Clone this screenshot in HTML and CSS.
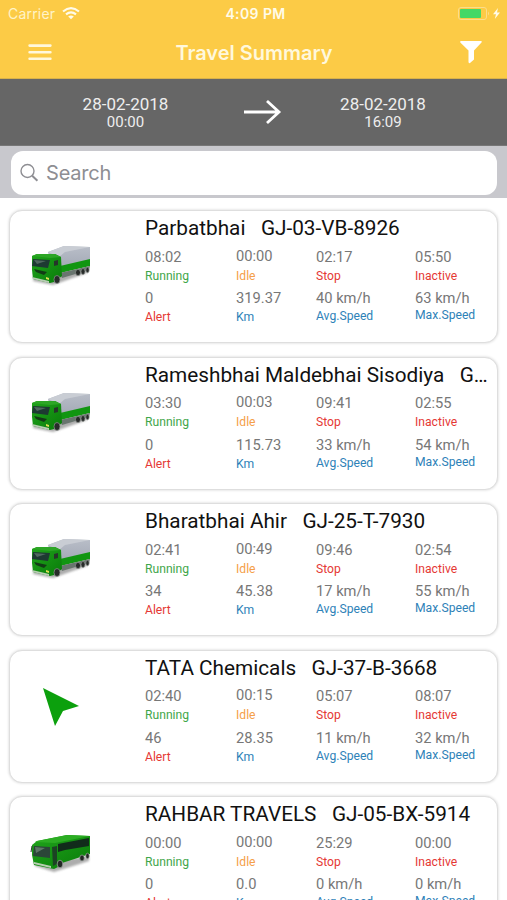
FILE: index.html
```
<!DOCTYPE html>
<html lang="en">
<head>
<meta charset="utf-8">
<title>Travel Summary</title>
<link rel="stylesheet" href="styles.css">
</head>
<body>
<svg class="defs" aria-hidden="true">
  <defs>
    <linearGradient id="cargo" x1="0" y1="0" x2="0" y2="1"><stop offset="0" stop-color="#b9bec8"/><stop offset="1" stop-color="#a3a9b6"/></linearGradient>
    <linearGradient id="paint" x1="0" y1="0" x2="1" y2="1"><stop offset="0" stop-color="#21a51c"/><stop offset="1" stop-color="#087b09"/></linearGradient>
    <filter id="soft" x="-20%" y="-50%" width="140%" height="200%"><feGaussianBlur stdDeviation="1.3"/></filter>
  </defs>
  <symbol id="truck" viewBox="0 0 80 60">
    <path d="M13 46l20 4 34-12v-4L14 40z" fill="#777" opacity=".6" filter="url(#soft)"/>
    <path d="M28 17l16-6 26 1v13l-29 8-12-12z" fill="url(#cargo)"/>
    <path d="M28 17l16-6 26 1-25 5-6 5z" fill="#c9cdd4"/>
    <path d="M40 31l30-7v7l-30 7z" fill="#119611"/>
    <path d="M40 38l30-7-1 4-27 8z" fill="#69756f"/>
    <path d="M12 21l5-2 18 0 6 3 1 19-8 6-4 1-17-4-1-9z" fill="url(#paint)"/>
    <path d="M12 21l5-2 18 0 6 3-11 1z" fill="#2da626"/>
    <path d="M13 24l17 1-2 8-16-2z" fill="#1d3a32"/>
    <path d="M14 25l12 1-9 3z" fill="#50685f"/>
    <path d="M14 34l13 3-3 3-8-3z" fill="#123c15"/>
    <path d="M34 26l4-1v5l-4 1z" fill="#26352a"/>
    <path d="M12 42l17 4v2l-16-4z" fill="#b9cdb4"/>
    <path d="M26 42l3 1v2l-3-1z" fill="#dcdf53"/>
    <g fill="#272b29" stroke="#929793" stroke-width=".7"><ellipse cx="37" cy="44.5" rx="3" ry="4"/><ellipse cx="58" cy="37.5" rx="2.5" ry="3.1"/><ellipse cx="63" cy="36.5" rx="2" ry="3"/><ellipse cx="67.5" cy="35" rx="1.7" ry="2.8"/></g>
  </symbol>
  <symbol id="bus" viewBox="0 0 80 60">
    <path d="M15 45l19 6 35-11v-4L14 40z" fill="#777" opacity=".6" filter="url(#soft)"/>
    <path d="M12 24l5-4 30-6 23 1v18l-28 9-4 4-4 2-20-4-2-10z" fill="url(#paint)"/>
    <path d="M17 20l30-6 23 1-35 7-20-1z" fill="#2cad23"/>
    <path d="M14 25l16 1v11l-17-2z" fill="#2b4638"/>
    <path d="M15 26l10 1-9 5z" fill="#5e7767"/>
    <path d="M38 23l31-6v8l-24 4-7 2z" fill="#112c1b"/>
    <path d="M32 26l5-1v18l-4 2z" fill="#1c4324"/>
    <path d="M14 41l17 4v2l-17-4z" fill="#baceb4"/>
    <path d="M12 25l-1 6" stroke="#263a29" fill="none"/>
    <g fill="#222724" stroke="#a4a9a5" stroke-width=".7"><ellipse cx="40" cy="43" rx="2.8" ry="3.8"/><ellipse cx="62" cy="37" rx="2.3" ry="3"/><ellipse cx="67.5" cy="35" rx="1.8" ry="2.8"/></g>
  </symbol>
  <symbol id="pointer" viewBox="0 0 80 60">
    <path d="M23 13l36 18-16 5-8 15z" fill="#0ca00d"/>
  </symbol>
</svg>

<header class="top">
  <div class="status">
    <div class="carrier"><span>Carrier</span>
      <svg width="18" height="13" viewBox="0 0 18 13" fill="none" stroke="#fffbe9" stroke-width="2.1"><path d="M1 4.5Q9-2.2 17 4.5M4 7.4q5-4.2 10 0"/><path d="M6.2 9.6q2.8-2 5.6 0L9 12.3z" fill="#fffbe9" stroke="none"/></svg>
    </div>
    <div class="clock">4:09 PM</div>
    <div class="power">
      <svg width="44" height="14" viewBox="0 0 44 14"><rect x=".5" y=".5" width="28" height="12" rx="2.5" fill="none" stroke="#fbdd8b"/><rect x="2" y="2" width="21" height="9" rx="1" fill="#45d866"/><path d="M30 4.5q2 2 0 4z" fill="#fbdd8b"/><path d="M40 1l-5 6.2h3L36.8 12l5.2-6.4h-3z" fill="#fffbe9"/></svg>
    </div>
  </div>
  <div class="nav">
    <svg class="menu" width="24" height="18" viewBox="0 0 24 18" stroke="#fff8dc" stroke-width="2.6" stroke-linecap="round"><path d="M1.6 1.6h20.8M1.6 8.2h20.8M1.6 14.8h20.8"/></svg>
    <h1>Travel Summary</h1>
    <svg class="filter" width="24" height="24" viewBox="0 0 24 24" fill="#fff"><path d="M2 0h20q1.5 0 .5 1.5L15 9.5v9L11 22q-1.5.5-1.5-1V9.5L1.3 1.5Q.5 0 2 0z"/></svg>
  </div>
</header>

<section class="range">
  <div class="date">28-02-2018<small>00:00</small></div>
  <svg width="40" height="26" viewBox="0 0 40 26" fill="none" stroke="#fff" stroke-width="2.8"><path d="M2 13h35M25 2l12 11-12 11"/></svg>
  <div class="date">28-02-2018<small>16:09</small></div>
</section>

<div class="search">
  <div class="field">
    <svg width="20" height="20" viewBox="0 0 20 20" fill="none" stroke="#8e8e93" stroke-width="1.4"><circle cx="7.5" cy="8" r="6.5"/><path d="M12.2 12.7l5.2 5" stroke-width="2"/></svg>
    <span>Search</span>
  </div>
</div>

<main class="list">
  <article class="card">
    <svg class="vehicle"><use href="#truck"/></svg>
    <div class="info">
      <h2>Parbatbhai&nbsp;&nbsp; GJ-03-VB-8926</h2>
      <div class="stats">
        <div class="stat">08:02<span class="green">Running</span></div><div class="stat raised">00:00<span class="orange">Idle</span></div><div class="stat">02:17<span class="red">Stop</span></div><div class="stat">05:50<span class="red">Inactive</span></div>
        <div class="stat">0<span class="red">Alert</span></div><div class="stat">319.37<span class="blue">Km</span></div><div class="stat avg">40 km/h<span class="blue">Avg.Speed</span></div><div class="stat max">63 km/h<span class="blue">Max.Speed</span></div>
      </div>
    </div>
  </article>
  <article class="card">
    <svg class="vehicle"><use href="#truck"/></svg>
    <div class="info">
      <h2>Rameshbhai Maldebhai Sisodiya&nbsp;&nbsp; G…</h2>
      <div class="stats">
        <div class="stat">03:30<span class="green">Running</span></div><div class="stat raised">00:03<span class="orange">Idle</span></div><div class="stat">09:41<span class="red">Stop</span></div><div class="stat">02:55<span class="red">Inactive</span></div>
        <div class="stat">0<span class="red">Alert</span></div><div class="stat">115.73<span class="blue">Km</span></div><div class="stat avg">33 km/h<span class="blue">Avg.Speed</span></div><div class="stat max">54 km/h<span class="blue">Max.Speed</span></div>
      </div>
    </div>
  </article>
  <article class="card">
    <svg class="vehicle"><use href="#truck"/></svg>
    <div class="info">
      <h2>Bharatbhai Ahir&nbsp;&nbsp; GJ-25-T-7930</h2>
      <div class="stats">
        <div class="stat">02:41<span class="green">Running</span></div><div class="stat raised">00:49<span class="orange">Idle</span></div><div class="stat">09:46<span class="red">Stop</span></div><div class="stat">02:54<span class="red">Inactive</span></div>
        <div class="stat">34<span class="red">Alert</span></div><div class="stat">45.38<span class="blue">Km</span></div><div class="stat avg">17 km/h<span class="blue">Avg.Speed</span></div><div class="stat max">55 km/h<span class="blue">Max.Speed</span></div>
      </div>
    </div>
  </article>
  <article class="card">
    <svg class="vehicle"><use href="#pointer"/></svg>
    <div class="info">
      <h2>TATA Chemicals&nbsp;&nbsp; GJ-37-B-3668</h2>
      <div class="stats">
        <div class="stat">02:40<span class="green">Running</span></div><div class="stat raised">00:15<span class="orange">Idle</span></div><div class="stat">05:07<span class="red">Stop</span></div><div class="stat">08:07<span class="red">Inactive</span></div>
        <div class="stat">46<span class="red">Alert</span></div><div class="stat">28.35<span class="blue">Km</span></div><div class="stat avg">11 km/h<span class="blue">Avg.Speed</span></div><div class="stat max">32 km/h<span class="blue">Max.Speed</span></div>
      </div>
    </div>
  </article>
  <article class="card">
    <svg class="vehicle"><use href="#bus"/></svg>
    <div class="info">
      <h2>RAHBAR TRAVELS&nbsp;&nbsp; GJ-05-BX-5914</h2>
      <div class="stats">
        <div class="stat">00:00<span class="green">Running</span></div><div class="stat raised">00:00<span class="orange">Idle</span></div><div class="stat">25:29<span class="red">Stop</span></div><div class="stat">00:00<span class="red">Inactive</span></div>
        <div class="stat">0<span class="red">Alert</span></div><div class="stat">0.0<span class="blue">Km</span></div><div class="stat avg">0 km/h<span class="blue">Avg.Speed</span></div><div class="stat max">0 km/h<span class="blue">Max.Speed</span></div>
      </div>
    </div>
  </article>
</main>
</body>
</html>
```
FILE: styles.css
```
* { box-sizing: border-box; }
body { margin: 0; width: 507px; height: 900px; overflow: hidden; background: #fff; font-family: Roboto, sans-serif; }
svg { display: block; flex: none; }
.defs { position: absolute; width: 0; height: 0; }

.top { height: 79px; background: #fccb46; color: #fffbe9; font-family: Inter, sans-serif; border-bottom: 1px solid #d9b24a; }
.status { height: 27px; display: grid; grid-template-columns: 1fr auto 1fr; align-items: center; padding: 0 4px 0 8px; font-size: 14px; }
.carrier { display: flex; align-items: center; gap: 7px; letter-spacing: .2px; color: #fff3c8; }
.clock { font-weight: 600; letter-spacing: .4px; }
.power { justify-self: end; padding-right: 1px; }
.nav { height: 51px; display: grid; grid-template-columns: 60px 1fr 60px; align-items: center; padding: 0 24px 0 28px; }
.nav h1 { margin: 0; padding-right: 3px; text-align: center; font-size: 20px; font-weight: 600; line-height: 24px; color: #fff8dc; }
.filter { justify-self: end; }

.range { height: 67px; background: #666; color: #eee; display: grid; grid-template-columns: 197px 40px 166px; column-gap: 18px; align-items: center; padding-left: 27px; border-bottom: 1px solid #777; }
.date { display: flex; flex-direction: column; align-items: center; font-size: 17px; line-height: 20px; }
.date small { font-size: 15px; line-height: 16px; }

.search { height: 52px; padding: 5px 10px 3px 11px; background: #c8c8cd; }
.field { height: 44px; border-radius: 12px; background: #fff; display: flex; align-items: center; gap: 6px; padding-left: 9px; color: #8e8e93; font: 20px/24px Inter, sans-serif; letter-spacing: -.2px; }

.list { display: flex; flex-direction: column; gap: 13.6px; padding: 12px 9px 0; }
.card { flex: none; height: 133px; display: flex; border: 1px solid #dedede; border-radius: 13px; background: #fff; box-shadow: 0 0 3px rgba(0,0,0,.18); }
.vehicle { width: 80px; height: 60px; margin: 24px 45px 0 10px; }
.info { flex: 1; min-width: 0; padding-top: 4px; }
.info h2 { margin: 0 0 6.5px; font-size: 20.75px; line-height: 26px; font-weight: 400; color: #111; white-space: pre; }
.stats { display: grid; grid-template-columns: 91px 80px 99px auto; grid-auto-rows: 41.5px; }
.stat { font-size: 14.7px; line-height: 18px; color: #777; white-space: nowrap; }
.stat span { display: block; font-size: 12.15px; line-height: 20px; }
.raised { margin-top: -1px; }
.raised span { margin-top: 1px; }
.avg span { margin-top: -1px; }
.max span { margin-top: -2px; }
.green { color: #3fa64a; }
.orange { color: #f5a04a; }
.red { color: #e53935; }
.blue { color: #2e82b8; }
```
